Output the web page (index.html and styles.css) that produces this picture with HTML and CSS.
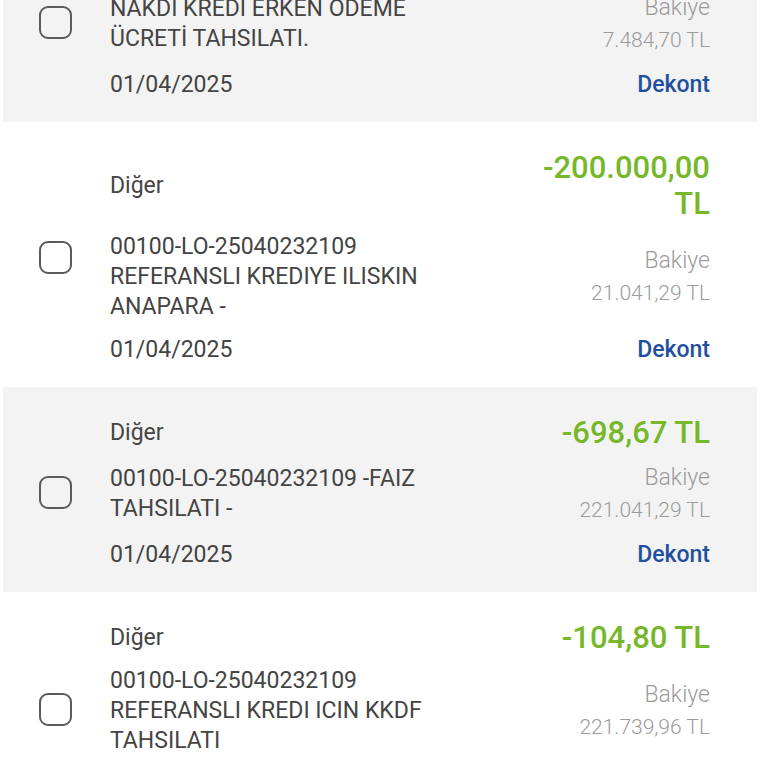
FILE: index.html
```html
<!DOCTYPE html>
<html>
<head>
<title>Hesap Hareketleri</title>
<link rel="stylesheet" href="styles.css">
</head>
<body>
<ul class="tx-list">
  <li class="tx tx-alt">
    <span class="tx-check"></span>
    <div class="tx-type">Diğer</div>
    <div class="tx-amount">-1.350,00 TL</div>
    <div class="tx-desc">NAKDI KREDI ERKEN ODEME ÜCRETİ TAHSILATI.</div>
    <div class="tx-balance"><span class="tx-balance-label">Bakiye</span><span>7.484,70 TL</span></div>
    <div class="tx-date">01/04/2025</div>
    <a class="tx-receipt" href="#">Dekont</a>
  </li>
  <li class="tx">
    <span class="tx-check"></span>
    <div class="tx-type">Diğer</div>
    <div class="tx-amount">-200.000,00 TL</div>
    <div class="tx-desc">00100-LO-25040232109 REFERANSLI KREDIYE ILISKIN ANAPARA -</div>
    <div class="tx-balance"><span class="tx-balance-label">Bakiye</span><span>21.041,29 TL</span></div>
    <div class="tx-date">01/04/2025</div>
    <a class="tx-receipt" href="#">Dekont</a>
  </li>
  <li class="tx tx-alt">
    <span class="tx-check"></span>
    <div class="tx-type">Diğer</div>
    <div class="tx-amount">-698,67 TL</div>
    <div class="tx-desc">00100-LO-25040232109 -FAIZ TAHSILATI -</div>
    <div class="tx-balance"><span class="tx-balance-label">Bakiye</span><span>221.041,29 TL</span></div>
    <div class="tx-date">01/04/2025</div>
    <a class="tx-receipt" href="#">Dekont</a>
  </li>
  <li class="tx">
    <span class="tx-check"></span>
    <div class="tx-type">Diğer</div>
    <div class="tx-amount">-104,80 TL</div>
    <div class="tx-desc">00100-LO-25040232109 REFERANSLI KREDI ICIN KKDF TAHSILATI</div>
    <div class="tx-balance"><span class="tx-balance-label">Bakiye</span><span>221.739,96 TL</span></div>
    <div class="tx-date">01/04/2025</div>
    <a class="tx-receipt" href="#">Dekont</a>
  </li>
</ul>
</body>
</html>
```

FILE: styles.css
```css
body {
  font-family: Roboto, "Liberation Sans", sans-serif;
  background-color: #fff;
  color: #444;
  margin: 0;
  padding: 0;
  overflow: hidden;
}

.tx-list {
  list-style: none;
  margin: -83px 0 0 0;
  padding: 0;
}

.tx {
  display: grid;
  grid-template-columns: 33px minmax(0, 1fr) 185px;
  grid-template-areas:
    "check type amount"
    "check desc balance"
    "check date receipt";
  column-gap: 38px;
  row-gap: 10px;
  align-items: center;
  margin: 0 11px 0 3px;
  padding: 28px 47px 22px 36px;
  font-size: 23px;
  line-height: 30px;
}

.tx-alt {
  background-color: #f3f3f3;
}

.tx-check {
  grid-area: check;
  width: 33px;
  height: 33px;
  box-sizing: border-box;
  border: 2.5px solid #5b5b5b;
  border-radius: 9px;
}

.tx-type {
  grid-area: type;
}

.tx-desc {
  grid-area: desc;
  max-width: 340px;
}

.tx-date {
  grid-area: date;
  margin-top: 3px;
}

.tx-amount {
  grid-area: amount;
  text-align: right;
  color: #77b82b;
  font-size: 31px;
  font-weight: 500;
  line-height: 36px;
}

.tx-balance {
  grid-area: balance;
  display: flex;
  flex-direction: column;
  align-items: flex-end;
  color: #9b9b9b;
  font-size: 21px;
  font-weight: 300;
  line-height: 33px;
}

.tx-balance-label {
  font-size: 23px;
}

.tx-receipt {
  grid-area: receipt;
  margin-top: 3px;
  text-align: right;
  color: #1f50a0;
  font-size: 23px;
  font-weight: 500;
  text-decoration: none;
}
```
